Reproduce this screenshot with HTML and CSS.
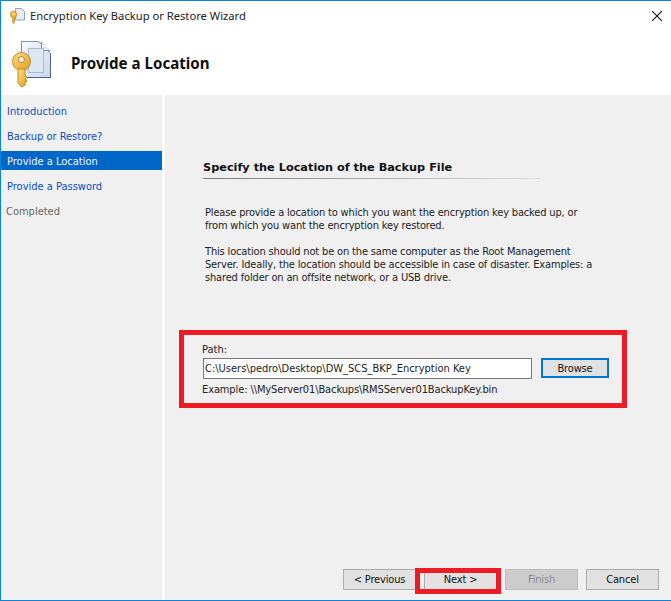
FILE: index.html
```html
<!DOCTYPE html>
<html lang="en">
<head>
<meta charset="utf-8">
<title>Encryption Key Backup or Restore Wizard</title>
<link rel="stylesheet" href="styles.css">
</head>
<body>
<div class="window">
  <header class="titlebar">
    <svg class="title-icon" width="15" height="16" viewBox="0 0 15 16">
      <path d="M5.500 .5h6l3 3v8.500h-9z" fill="#e6ecf6" stroke="#8fa2bb"/>
      <circle cx="3.500" cy="6.500" r="3.200" fill="#f4b834" stroke="#c98a1a" stroke-width=".8"/>
      <circle cx="3.500" cy="5.800" r="1" fill="#fff"/>
      <path d="M2.500 9.500h2.200v4.500l-1 1.500-1.200-1z" fill="#efb02c" stroke="#c98a1a" stroke-width=".6"/>
    </svg>
    <span class="title-text">Encryption Key Backup or Restore Wizard</span>
    <svg class="close" width="10" height="10" viewBox="0 0 10 10"><path d="M0 0l10 10M10 0L0 10" stroke="#111" stroke-width="1.100" fill="none"/></svg>
  </header>
  <div class="banner">
    <svg class="banner-icon" width="42" height="48" viewBox="0 0 42 48">
      <defs>
        <linearGradient id="pg" x1="0" y1="0" x2="1" y2="1"><stop offset="0" stop-color="#f8fafd"/><stop offset="1" stop-color="#c9d6ea"/></linearGradient>
        <linearGradient id="kg" x1="0" y1="0" x2="1" y2="1"><stop offset="0" stop-color="#fde08a"/><stop offset="1" stop-color="#e29a1c"/></linearGradient>
      </defs>
      <path d="M9.500 1.500h17l12 12v24h-29z" fill="url(#pg)" stroke="#7f93ad"/>
      <path d="M29.500 1.500v9h9" fill="#e8eef7" stroke="#7f93ad"/>
      <rect x="16.500" y="8.500" width="15" height="24" fill="#dde6f3" stroke="#a9bad0"/>
      <path d="M9 37.500h29.500v-24" fill="none" stroke="#4d6484"/>
      <circle cx="9.500" cy="21.500" r="9" fill="url(#kg)" stroke="#c98a1a"/>
      <circle cx="9.500" cy="19.500" r="3" fill="#f4f1e6" stroke="#a87416" stroke-width=".8"/>
      <path d="M6 29h7v6l2 2-2 2 2 2-2 2v2l-3 2-4-4z" fill="url(#kg)" stroke="#c98a1a"/>
    </svg>
    <h1 class="banner-title">Provide a Location</h1>
  </div>
  <div class="body">
    <nav class="nav">
      <a class="nav-item">Introduction</a>
      <a class="nav-item">Backup or Restore?</a>
      <a class="nav-item active">Provide a Location</a>
      <a class="nav-item">Provide a Password</a>
      <a class="nav-item done">Completed</a>
    </nav>
    <main class="content">
      <div class="page">
        <h2 class="section-title">Specify the Location of the Backup File</h2>
        <div class="copy">
          <p>Please provide a location to which you want the encryption key backed up, or<br>from which you want the encryption key restored.</p>
          <p>This location should not be on the same computer as the Root Management<br>Server. Ideally, the location should be accessible in case of disaster. Examples: a<br>shared folder on an offsite network, or a USB drive.</p>
        </div>
        <div class="path-group">
          <div class="path-label">Path:</div>
          <div class="path-row">
            <div class="path-input">C:\Users\pedro\Desktop\DW_SCS_BKP_Encryption Key</div>
            <button class="btn browse">Browse</button>
          </div>
          <div class="path-example">Example: \\MyServer01\Backups\RMSServer01BackupKey.bin</div>
          <div class="mark mark-path"></div>
        </div>
      </div>
      <footer class="actions">
        <button class="btn action">&lt; Previous</button>
        <button class="btn action next">Next &gt;<span class="mark mark-next"></span></button>
        <button class="btn action disabled">Finish</button>
        <button class="btn action">Cancel</button>
      </footer>
    </main>
  </div>
</div>
</body>
</html>
```
FILE: styles.css
```css
* { box-sizing: border-box; }
html, body { margin: 0; padding: 0; height: 100%; }
body { font-family: "DejaVu Sans", sans-serif; font-stretch: condensed; font-size: 11px; color: #111; background: #fff; }
.window { height: 601px; display: flex; flex-direction: column; border-top: 1px solid #0a84d8; border-bottom: 1px solid #0a84d8; border-left: 1px solid #0a84d8; background: #fff; overflow: hidden; }
.titlebar { height: 29px; flex: none; display: flex; align-items: center; padding: 0 9px 0 9px; }
.title-icon { flex: none; margin: 1px 5px 0 0; }
.title-text { font-family: "Noto Sans", sans-serif; font-stretch: normal; font-size: 11.200px; color: #222; flex: 1; }
.banner { height: 65px; flex: none; display: flex; align-items: center; padding: 0 0 0 11px; }
.banner-icon { flex: none; margin: 3px 0 0 0; }
.banner-title { margin: 0 0 0 17px; font-family: "Noto Sans", sans-serif; font-stretch: normal; font-size: 15.100px; font-weight: 700; color: #111; }
.body { flex: 1; display: flex; min-height: 0; }
.nav { width: 161px; flex: none; background: #f0f0f0; padding-top: 6px; display: flex; flex-direction: column; gap: 6px; margin-right: 3px; }
.nav-item { height: 19px; line-height: 21px; padding-left: 6px; color: #0a4fc4; }
.nav-item.active { background: #0067c9; color: #f2f6fb; }
.nav-item.done { color: #666; padding-left: 5px; }
.content { flex: 1; background: #f0f0f0; display: flex; flex-direction: column; min-width: 0; }
.page { flex: 1; padding: 64px 0 0 38px; }
.section-title { margin: 0; width: 337px; height: 20px; font-family: "DejaVu Sans", sans-serif; font-stretch: normal; font-size: 11.300px; font-weight: 700; color: #111; line-height: 18px; border-bottom: 1px solid transparent; border-image: linear-gradient(90deg, #777, #ddd) 1; }
.copy { margin: 27px 0 0 2px; line-height: 13px; color: #222; letter-spacing: -0.16px; }
.copy p { margin: 0 0 13px; }
.path-group { position: relative; margin: 58px 0 0 -1px; }
.path-label { height: 13px; line-height: 15px; color: #222; }
.path-row { display: flex; align-items: flex-start; margin-top: 3px; }
.path-input { width: 329px; height: 21px; line-height: 19px; margin-left: 1px; padding-left: 1px; background: #fff; border: 1px solid #7a7a7a; color: #222; white-space: nowrap; overflow: hidden; }
.btn { font: inherit; color: #111; background: #e1e1e1; border: 1px solid #adadad; padding: 0; text-align: center; letter-spacing: -0.15px; }
.browse { width: 68px; height: 20px; margin-left: 9px; border: 2px solid #0078d7; line-height: 15px; }
.path-example { margin-top: 3px; height: 14px; line-height: 16px; color: #222; letter-spacing: -0.11px; }
.actions { flex: none; display: flex; gap: 8px; padding: 0 12px 10px 178px; }
.action { position: relative; width: 73px; height: 21px; line-height: 18px; }
.disabled { background: #ccc; border-color: #bfbfbf; color: #8c8c8c; }
.mark { position: absolute; border: 5px solid #ed1c24; pointer-events: none; }
.mark-path { left: -23px; top: -12px; width: 448px; height: 78px; }
.mark-next { left: -10px; top: -2px; width: 86px; height: 26px; }
```
